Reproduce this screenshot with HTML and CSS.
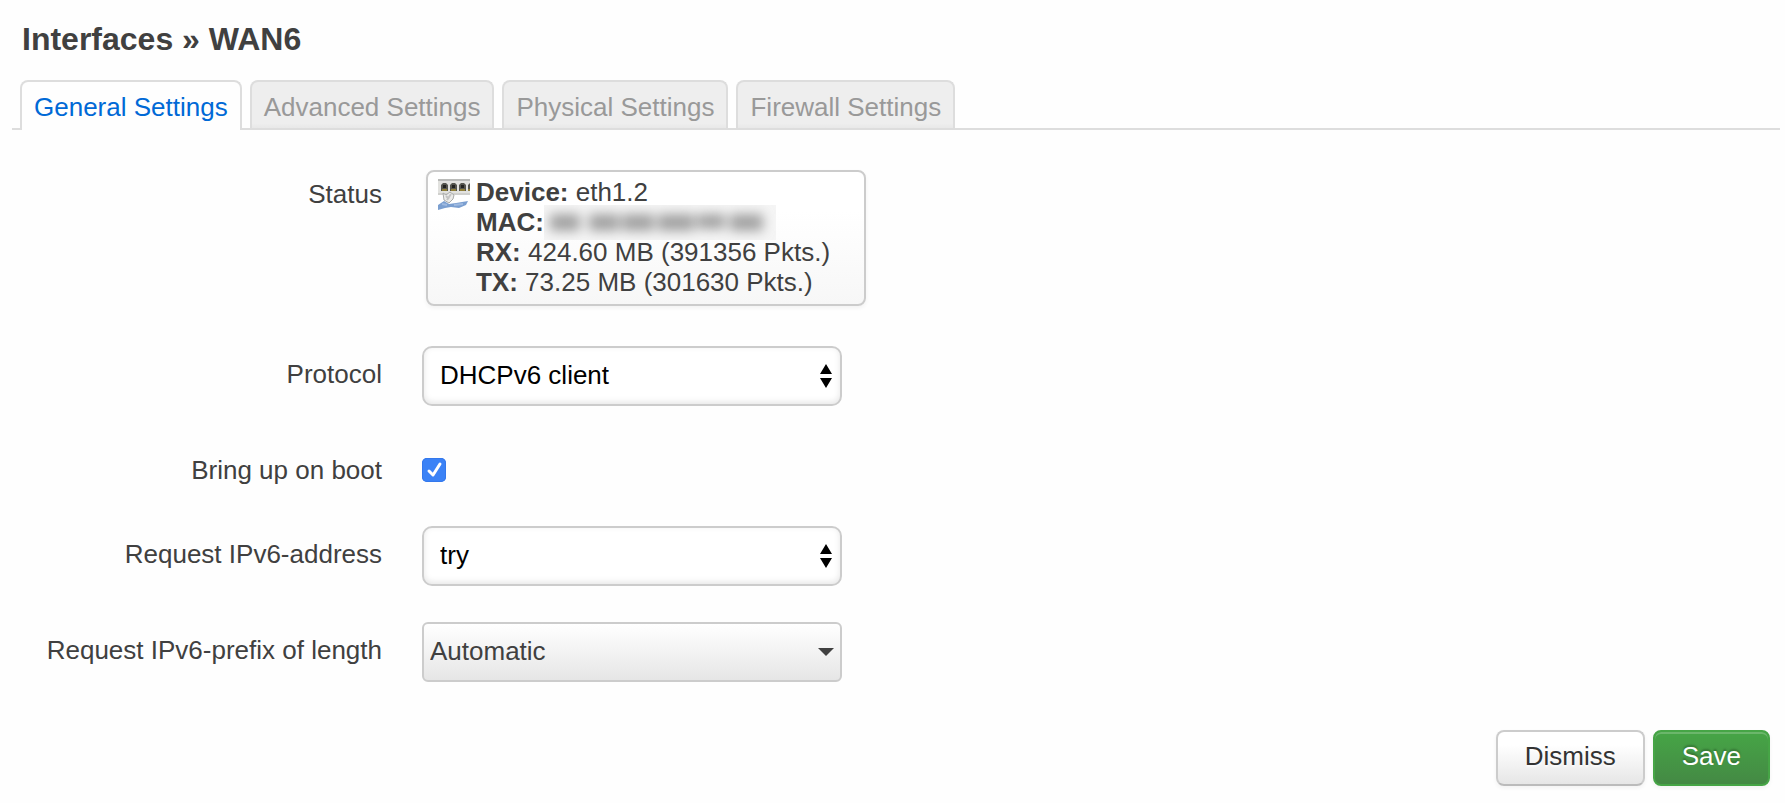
FILE: index.html
```html
<!DOCTYPE html>
<html lang="en">

<head>
    <meta charset="UTF-8">
    <meta name="viewport" content="width=device-width, initial-scale=1.0">
    <title>Interfaces » WAN6</title>
    <link rel="stylesheet" href="styles.css">
</head>

<body>
    <h4>Interfaces » WAN6</h4>

    <ul class="tabs">
        <li class="tab active"><a href="#general">General Settings</a></li>
        <li class="tab"><a href="#advanced">Advanced Settings</a></li>
        <li class="tab"><a href="#physical">Physical Settings</a></li>
        <li class="tab"><a href="#firewall">Firewall Settings</a></li>
    </ul>

    <form id="general">
        <div class="row">
            <span class="title">Status</span>
            <div class="badge">
                <svg class="icon" viewBox="0 0 32 32" width="32" height="32" aria-hidden="true">
                    <rect x="0" y="0" width="32" height="16" fill="#e2e2df"/>
                    <path d="M0 1h32" stroke="#b9bab8" stroke-width="2"/>
                    <path d="M0 15h32" stroke="#d0d0cd" stroke-width="2"/>
                    <g fill="#55554f">
                        <path d="M3 12V6l2-2h3l2 2v6z"/>
                        <path d="M12 12V6l2-2h3l2 2v6z"/>
                        <path d="M21 12V6l2-2h3l2 2v6z"/>
                        <path d="M30 12V6l2-2v8z"/>
                    </g>
                    <path d="M5 6h3v3H5zM14 6h3v3h-3zM23 6h3v3h-3z" fill="#22221f"/>
                    <path d="M4 11h5M13 11h5M22 11h5M30 11h2" stroke="#91803a" stroke-width="2"/>
                    <path d="M5 14l3 2 4-3 4 3-1 4-4 4-5-3z" fill="#ececea" stroke="#aaabaa"/>
                    <path d="M8 17l3 3M13 15l-4 6" stroke="#c4c4c4" stroke-width="2"/>
                    <path d="M0 31V26l6-4 5 3 7-1 12-2-2 4-7 3-8-1-6 1z" fill="#7b9fd0"/>
                    <path d="M4 25l5 1M16 26l9-1" stroke="#9fbae0" stroke-width="2"/>
                </svg>
                <div class="stats">
                    <div><strong>Device:</strong> eth1.2</div>
                    <div class="mac">
                        <strong>MAC:</strong>
                        <svg class="masked" viewBox="0 0 232 35" width="232" height="35" role="img" aria-label="hidden">
                            <defs>
                                <filter id="soft" x="-10%" y="-80%" width="120%" height="260%">
                                    <feGaussianBlur stdDeviation="6"/>
                                </filter>
                            </defs>
                            <rect width="232" height="35" fill="#f5f5f5"/>
                            <g fill="#a2a2a2" filter="url(#soft)">
                                <rect x="6" y="9" width="30" height="17"/>
                                <rect x="45" y="9" width="30" height="17"/>
                                <rect x="78" y="9" width="32" height="17"/>
                                <rect x="114" y="9" width="36" height="17"/>
                                <rect x="153" y="9" width="28" height="15"/>
                                <rect x="186" y="9" width="33" height="17"/>
                            </g>
                        </svg>
                    </div>
                    <div><strong>RX:</strong> 424.60 MB (391356 Pkts.)</div>
                    <div><strong>TX:</strong> 73.25 MB (301630 Pkts.)</div>
                </div>
            </div>
        </div>

        <div class="row">
            <label class="title" for="proto">Protocol</label>
            <div class="field">
                <select id="proto">
                    <option>DHCPv6 client</option>
                    <option>DHCP client</option>
                    <option>Static address</option>
                </select>
                <svg class="arrows" viewBox="0 0 12 24" width="12" height="24" aria-hidden="true">
                    <path d="M6 0l6 10H0zM6 24L0 14h12z"/>
                </svg>
            </div>
        </div>

        <div class="row check-row">
            <label class="title" for="auto">Bring up on boot</label>
            <div class="field check">
                <input type="checkbox" id="auto" checked>
                <svg class="tick" viewBox="0 0 24 24" width="24" height="24" aria-hidden="true">
                    <path d="M7 13l4 4 7-11"/>
                </svg>
            </div>
        </div>

        <div class="row">
            <label class="title" for="reqaddress">Request IPv6-address</label>
            <div class="field">
                <select id="reqaddress">
                    <option>try</option>
                    <option>force</option>
                    <option>disabled</option>
                </select>
                <svg class="arrows" viewBox="0 0 12 24" width="12" height="24" aria-hidden="true">
                    <path d="M6 0l6 10H0zM6 24L0 14h12z"/>
                </svg>
            </div>
        </div>

        <div class="row">
            <label class="title" for="reqprefix">Request IPv6-prefix of length</label>
            <div class="field">
                <select id="reqprefix" class="dropdown">
                    <option>Automatic</option>
                    <option>disabled</option>
                    <option>48</option>
                    <option>64</option>
                </select>
                <svg class="arrows caret" viewBox="0 0 16 8" width="16" height="8" aria-hidden="true">
                    <path d="M0 0h16L8 8z"/>
                </svg>
            </div>
        </div>

        <div class="actions">
            <button type="button" class="btn">Dismiss</button>
            <button type="button" class="btn save">Save</button>
        </div>
    </form>
</body>

</html>
```

FILE: styles.css
```css
* {
    box-sizing: border-box;
}

body {
    margin: 0;
    padding: 20px 5px 16px 12px;
    font-family: "Helvetica Neue", Helvetica, "Liberation Sans", Arial, sans-serif;
    font-size: 26px;
    line-height: 30px;
    color: #404040;
    background-color: #fefefe;
}

h4 {
    margin: 0 0 22px 10px;
    font-size: 32px;
    line-height: 38px;
}

.tabs {
    display: flex;
    gap: 8px;
    margin: 0 0 36px;
    padding: 0 8px;
    list-style: none;
    border-bottom: 2px solid #ddd;
}

.tab {
    border: 2px solid #ddd;
    border-bottom: 0;
    border-radius: 8px 8px 0 0;
    background: linear-gradient(#eee 90%, #e8e8e8);
}

.tab a {
    display: block;
    padding: 10px 12px 6px;
    color: #999;
    text-decoration: none;
}

.tab.active {
    margin-bottom: -2px;
    background: #fefefe;
}

.tab.active a {
    color: #0069d6;
}

.row {
    display: flex;
    gap: 40px;
    margin-bottom: 36px;
}

.title {
    width: 370px;
    padding-top: 12px;
    line-height: 32px;
    text-align: right;
}

.badge {
    display: flex;
    gap: 6px;
    width: 440px;
    margin: 4px;
    padding: 5px 10px 7px;
    border: 2px solid #ccc;
    border-radius: 8px;
    background: linear-gradient(#fff 30%, #f7f7f7);
    box-shadow: 0 2px 4px rgba(0, 0, 0, 0.05);
}

.icon {
    flex: none;
    margin-top: 2px;
}

.mac {
    display: flex;
    align-items: center;
    height: 30px;
}

.field {
    display: grid;
    align-items: center;
    width: 420px;
}

.field select,
.field input,
.field svg {
    grid-area: 1 / 1;
}

select {
    width: 100%;
    height: 60px;
    padding: 0 40px 3px 16px;
    border: 2px solid #ccc;
    border-radius: 10px;
    appearance: none;
    font: inherit;
    color: #000;
    background: #fff;
    box-shadow: inset 0 -2px 6px rgba(0, 0, 0, 0.1);
}

.dropdown {
    padding-left: 6px;
    border-radius: 6px;
    color: #404040;
    background: linear-gradient(#fff, #e6e6e6);
    box-shadow: none;
}

.arrows {
    justify-self: end;
    margin-right: 10px;
    pointer-events: none;
}

.caret {
    margin-right: 8px;
    fill: #404040;
}

.check-row {
    height: 48px;
}

.check input {
    width: 24px;
    height: 24px;
    margin: 0;
    border-radius: 5px;
    appearance: none;
    background: #fff;
    box-shadow: inset 0 0 0 2px #ccc;
}

.check input:checked {
    background: #3b82f6;
    box-shadow: inset 0 0 0 1px #3478ec;
}

.check {
    padding-top: 8px;
}

.tick {
    fill: none;
    stroke: #fff;
    stroke-width: 3;
    stroke-linecap: round;
    stroke-linejoin: round;
    pointer-events: none;
}

input:not(:checked) + .tick {
    display: none;
}

.actions {
    display: flex;
    justify-content: flex-end;
    gap: 8px;
    margin-top: 48px;
    padding-right: 10px;
}

.btn {
    height: 56px;
    padding: 0 27px 4px;
    border: 2px solid #ccc;
    border-bottom-color: #bbb;
    border-radius: 8px;
    font: inherit;
    color: #333;
    text-shadow: 0 2px 2px rgba(255, 255, 255, 0.75);
    background: linear-gradient(#fff 25%, #e6e6e6);
    box-shadow: 0 2px 4px rgba(0, 0, 0, 0.05);
}

.save {
    border-color: #46a546;
    color: #fff;
    text-shadow: 0 -2px 2px rgba(0, 0, 0, 0.25);
    background: linear-gradient(#46a546, #448944);
    box-shadow: inset 0 2px 0 rgba(255, 255, 255, 0.2), 0 2px 4px rgba(0, 0, 0, 0.05);
}
```
